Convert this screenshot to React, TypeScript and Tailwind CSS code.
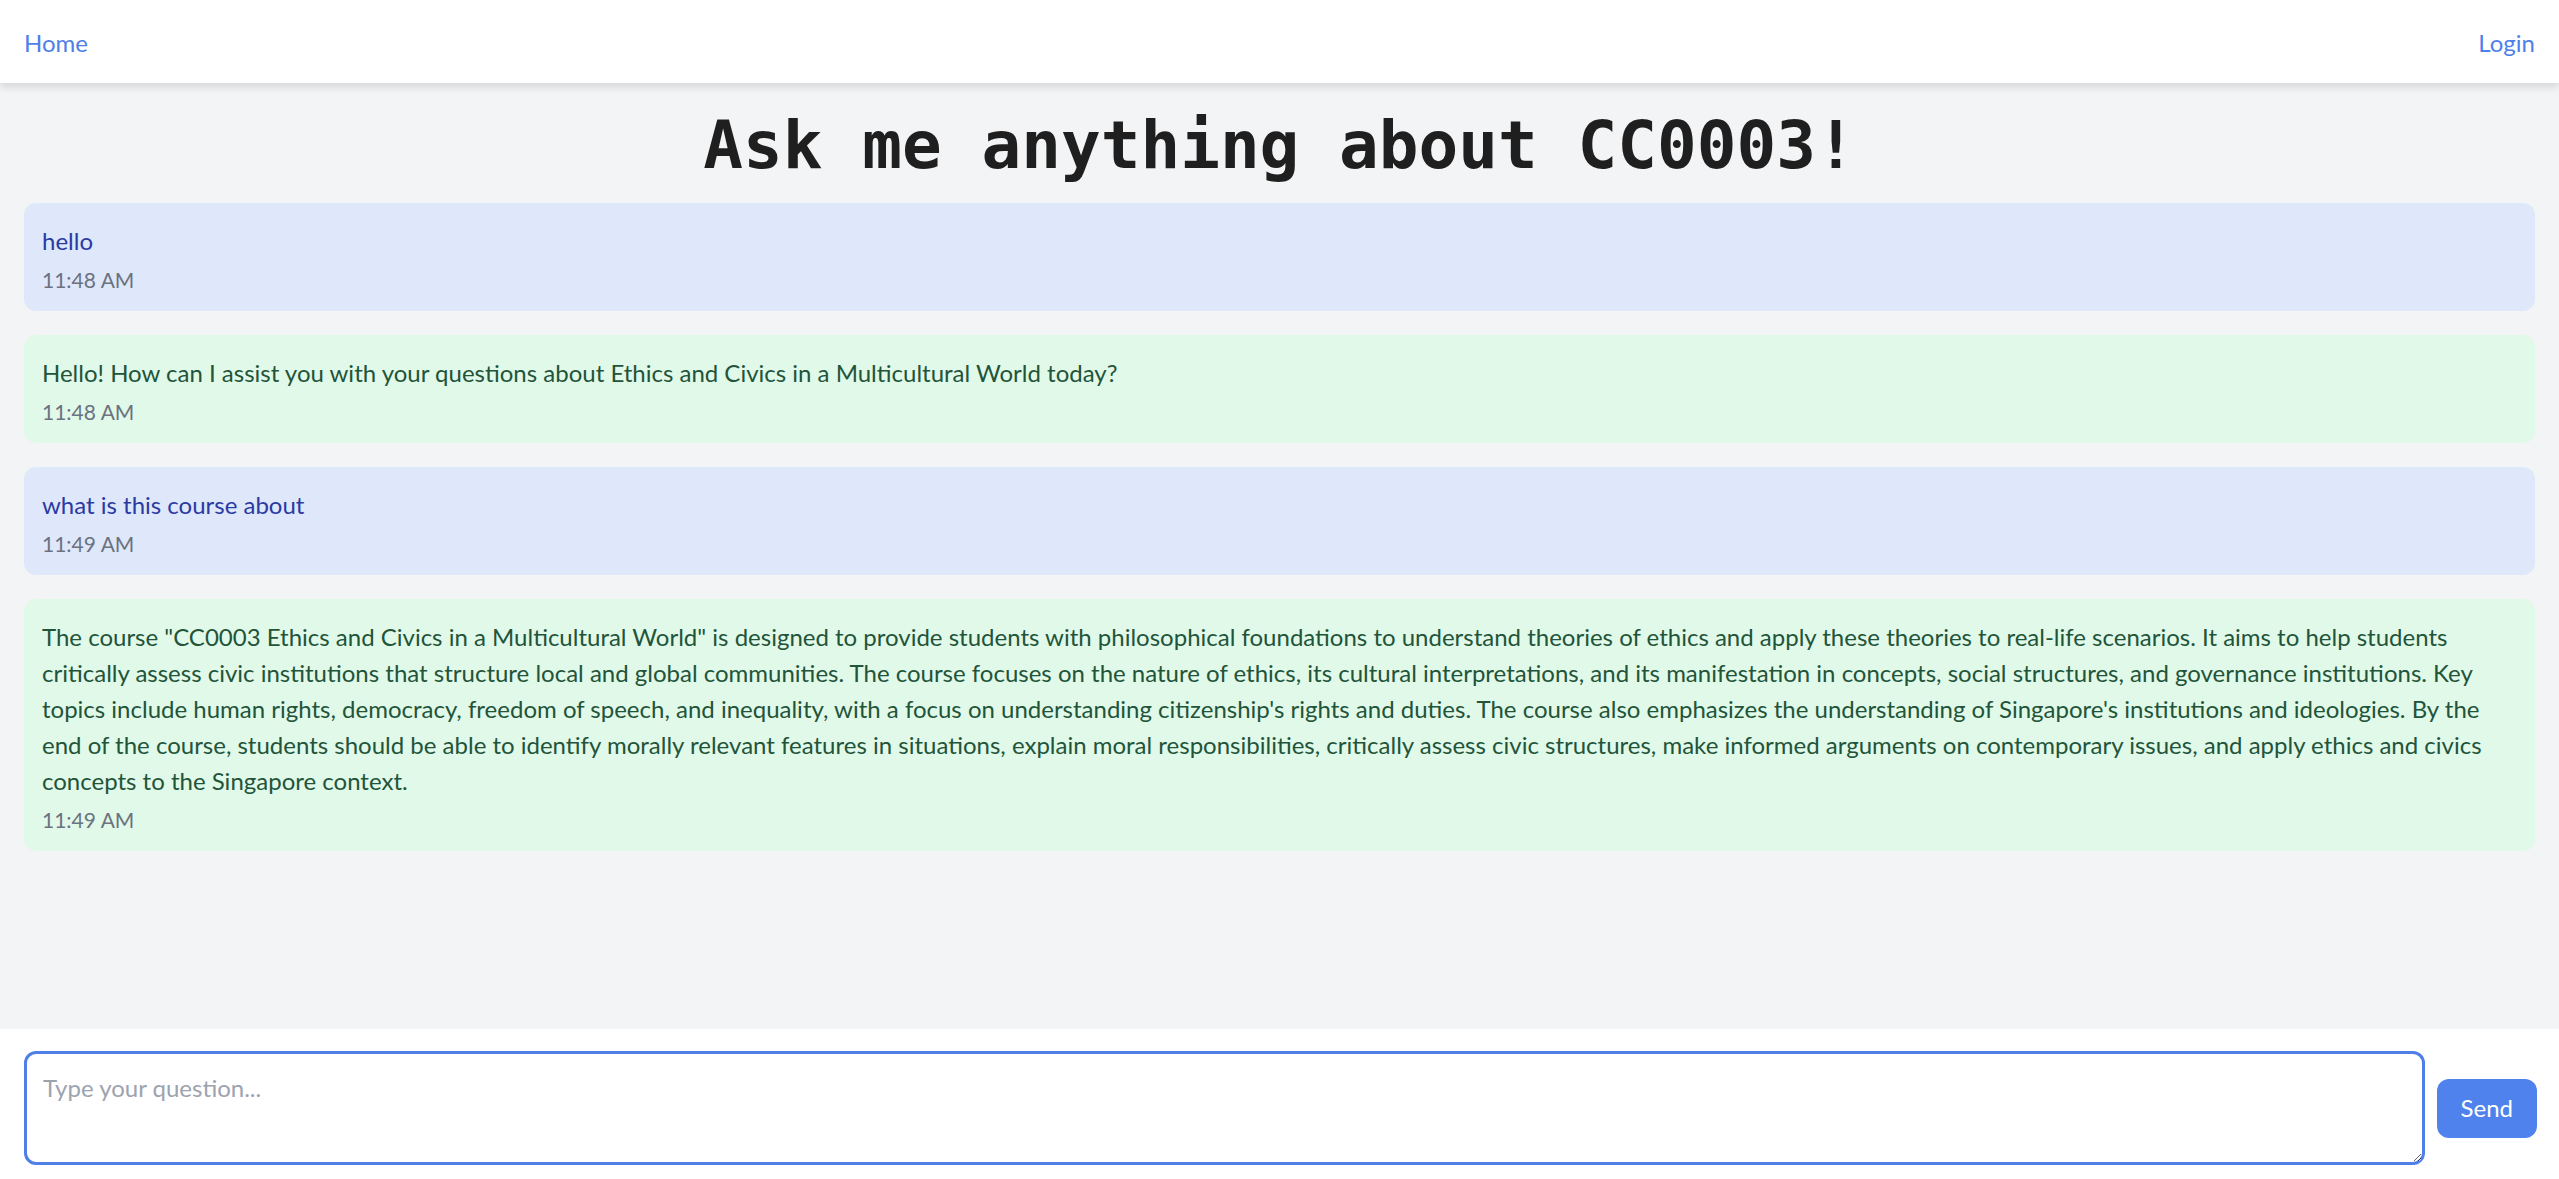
import React from "react";

const font = { fontFamily: "Lato, 'Liberation Sans', sans-serif" };

type Msg = { role: "user" | "bot"; text: string; time: string };

const messages: Msg[] = [
  { role: "user", text: "hello", time: "11:48 AM" },
  {
    role: "bot",
    text: "Hello! How can I assist you with your questions about Ethics and Civics in a Multicultural World today?",
    time: "11:48 AM",
  },
  { role: "user", text: "what is this course about", time: "11:49 AM" },
  {
    role: "bot",
    text: "The course \"CC0003 Ethics and Civics in a Multicultural World\" is designed to provide students with philosophical foundations to understand theories of ethics and apply these theories to real-life scenarios. It aims to help students critically assess civic institutions that structure local and global communities. The course focuses on the nature of ethics, its cultural interpretations, and its manifestation in concepts, social structures, and governance institutions. Key topics include human rights, democracy, freedom of speech, and inequality, with a focus on understanding citizenship's rights and duties. The course also emphasizes the understanding of Singapore's institutions and ideologies. By the end of the course, students should be able to identify morally relevant features in situations, explain moral responsibilities, critically assess civic structures, make informed arguments on contemporary issues, and apply ethics and civics concepts to the Singapore context.",
    time: "11:49 AM",
  },
];

export default function App() {
  return (
    <div className="h-screen flex flex-col bg-[#f3f4f6]" style={font}>
      <nav className="h-[83px] shrink-0 bg-white shadow-[0_4px_8px_rgba(0,0,0,0.12)] flex items-center justify-between px-6 pt-[2px] relative z-10">
        <a className="text-[24px] leading-[36px] text-[#4f7fe8]">Home</a>
        <a className="text-[24px] leading-[36px] text-[#4f7fe8]">Login</a>
      </nav>
      <main className="flex-1 px-6 pt-6 overflow-hidden">
        <h1
          className="text-center text-[66px] leading-[72px] font-bold text-[#1f1f1f] mb-6 pt-[3px] h-[72px]"
          style={{ fontFamily: "'DejaVu Sans Mono', 'Liberation Mono', monospace" }}
        >
          Ask me anything about CC0003!
        </h1>
        <div className="flex flex-col gap-6">
          {messages.map((m, i) => (
            <div
              key={i}
              className={
                m.role === "user"
                  ? "rounded-[12px] bg-[#dee8fa] pt-[20px] pb-[16px] px-[18px]"
                  : "rounded-[12px] bg-[#e1f9e8] pt-[20px] pb-[16px] px-[18px]"
              }
            >
              <p
                className={
                  m.role === "user"
                    ? "text-[24px] leading-[36px] text-[#2b3aa3]"
                    : "text-[24px] leading-[36px] text-[#22543a]"
                }
              >
                {m.text}
              </p>
              <p className="mt-[6px] text-[21px] leading-[30px] text-[#6b7280]">{m.time}</p>
            </div>
          ))}
        </div>
      </main>
      <footer className="shrink-0 bg-white flex items-center gap-3 pl-6 pr-[22px] pt-[22px] pb-[14px]">
        <textarea
          rows={2}
          placeholder="Type your question..."
          className="flex-1 h-[114px] rounded-[12px] border-[3px] border-[#4f7fe8] px-[16px] pt-[16px] pb-[14px] text-[24px] leading-[36px] placeholder:text-[#9ca3af] outline-none"
          style={font}
        />
        <button className="h-[59px] px-6 rounded-[12px] bg-[#4f82ec] text-white text-[24px] leading-[36px]">
          Send
        </button>
      </footer>
    </div>
  );
}
